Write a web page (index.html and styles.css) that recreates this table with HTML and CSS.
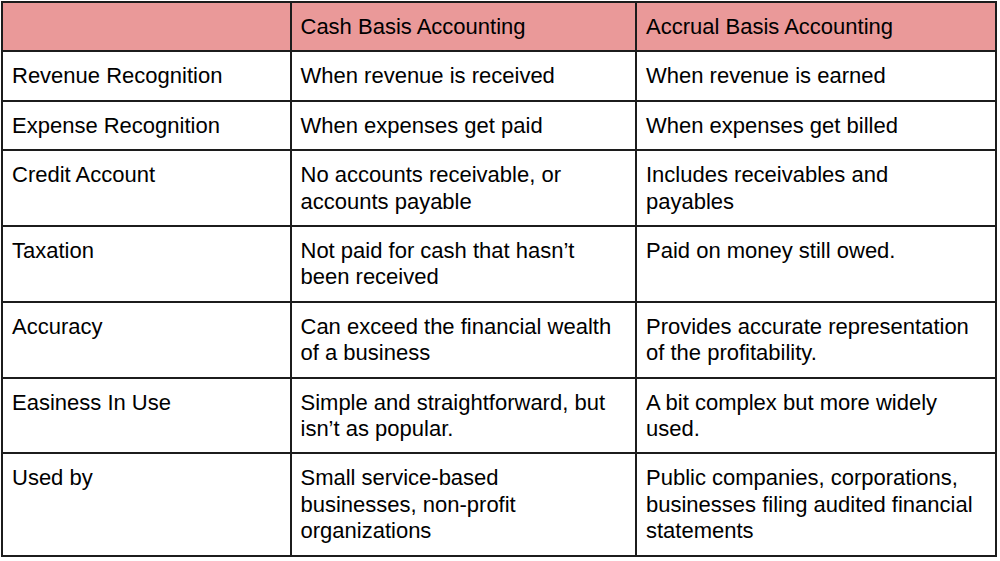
FILE: index.html
```html
<!DOCTYPE html>
<html lang="en">
<head>
<meta charset="utf-8">
<title>Cash vs Accrual Basis Accounting</title>
<link rel="stylesheet" href="styles.css">
</head>
<body>
<div class="table">
  <div class="cell head"></div>
  <div class="cell head">Cash Basis Accounting</div>
  <div class="cell head">Accrual Basis Accounting</div>

  <div class="cell">Revenue Recognition</div>
  <div class="cell">When revenue is received</div>
  <div class="cell">When revenue is earned</div>

  <div class="cell">Expense Recognition</div>
  <div class="cell">When expenses get paid</div>
  <div class="cell">When expenses get billed</div>

  <div class="cell">Credit Account</div>
  <div class="cell">No accounts receivable, or accounts payable</div>
  <div class="cell">Includes receivables and payables</div>

  <div class="cell">Taxation</div>
  <div class="cell">Not paid for cash that hasn’t been received</div>
  <div class="cell">Paid on money still owed.</div>

  <div class="cell">Accuracy</div>
  <div class="cell">Can exceed the financial wealth of a business</div>
  <div class="cell">Provides accurate representation of the profitability.</div>

  <div class="cell">Easiness In Use</div>
  <div class="cell">Simple and straightforward, but isn’t as popular.</div>
  <div class="cell">A bit complex but more widely used.</div>

  <div class="cell">Used by</div>
  <div class="cell">Small service-based businesses, non-profit organizations</div>
  <div class="cell">Public companies, corporations, businesses filing audited financial statements</div>
</div>
</body>
</html>
```

FILE: styles.css
```css
html, body {
  margin: 0;
  padding: 0;
  background: #ffffff;
}

body {
  font-family: "Liberation Sans", Arial, sans-serif;
  font-size: 22px;
  line-height: 26.4px;
  color: #000000;
}

.table {
  display: grid;
  grid-template-columns: 288.5px 345.5px 360px;
  width: 996px;
  margin: 1px 0 0 1px;
  border-top: 2px solid #1c1c1c;
  border-left: 2px solid #1c1c1c;
  box-sizing: border-box;
}

.cell {
  box-sizing: border-box;
  border-right: 2px solid #1c1c1c;
  border-bottom: 2px solid #1c1c1c;
  padding: 11px 18px 10px 9px;
}

.head {
  background: #ea9999;
}
```
